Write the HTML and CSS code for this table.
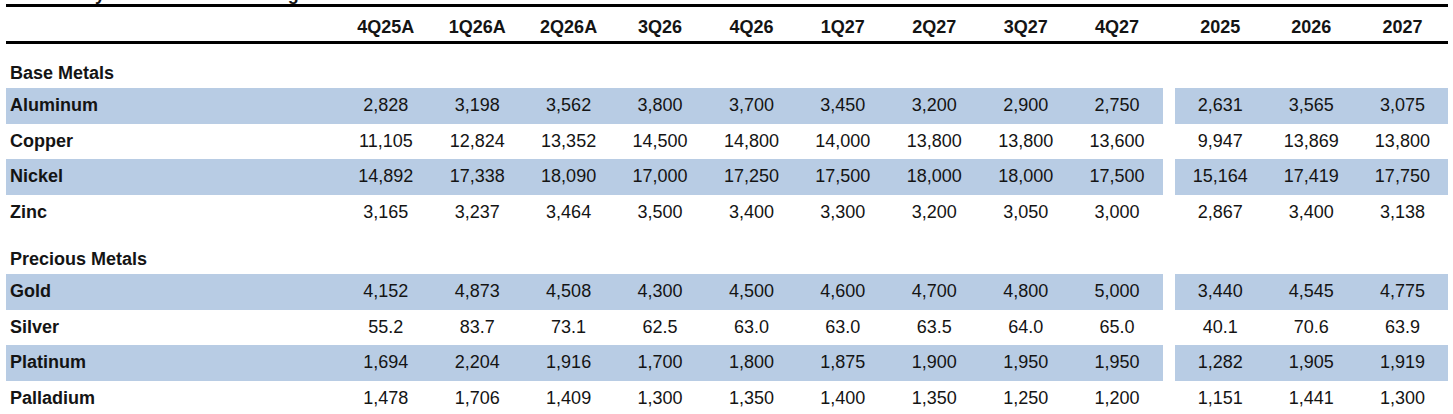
FILE: index.html
```html
<!DOCTYPE html>
<html lang="en">
<head>
<meta charset="utf-8">
<title>Commodity Price Forecast Averages</title>
<link rel="stylesheet" href="styles.css">
</head>
<body>
<div class="title">Commodity Price Forecast Averages</div>
<table class="fc">
  <colgroup>
    <col class="c-label">
    <col class="c-q"><col class="c-q"><col class="c-q"><col class="c-q"><col class="c-q"><col class="c-q"><col class="c-q"><col class="c-q"><col class="c-q">
    <col class="c-gap">
    <col class="c-y"><col class="c-y"><col class="c-y">
  </colgroup>
  <thead>
    <tr>
      <th></th>
      <th>4Q25A</th><th>1Q26A</th><th>2Q26A</th><th>3Q26</th><th>4Q26</th><th>1Q27</th><th>2Q27</th><th>3Q27</th><th>4Q27</th>
      <th class="gap"></th>
      <th>2025</th><th>2026</th><th>2027</th>
    </tr>
  </thead>
  <tbody>
    <tr class="sec"><td colspan="14">Base Metals</td></tr>
    <tr class="band">
      <td class="lbl">Aluminum</td>
      <td>2,828</td><td>3,198</td><td>3,562</td><td>3,800</td><td>3,700</td><td>3,450</td><td>3,200</td><td>2,900</td><td>2,750</td>
      <td class="gap"></td>
      <td>2,631</td><td>3,565</td><td>3,075</td>
    </tr>
    <tr>
      <td class="lbl">Copper</td>
      <td>11,105</td><td>12,824</td><td>13,352</td><td>14,500</td><td>14,800</td><td>14,000</td><td>13,800</td><td>13,800</td><td>13,600</td>
      <td class="gap"></td>
      <td>9,947</td><td>13,869</td><td>13,800</td>
    </tr>
    <tr class="band">
      <td class="lbl">Nickel</td>
      <td>14,892</td><td>17,338</td><td>18,090</td><td>17,000</td><td>17,250</td><td>17,500</td><td>18,000</td><td>18,000</td><td>17,500</td>
      <td class="gap"></td>
      <td>15,164</td><td>17,419</td><td>17,750</td>
    </tr>
    <tr>
      <td class="lbl">Zinc</td>
      <td>3,165</td><td>3,237</td><td>3,464</td><td>3,500</td><td>3,400</td><td>3,300</td><td>3,200</td><td>3,050</td><td>3,000</td>
      <td class="gap"></td>
      <td>2,867</td><td>3,400</td><td>3,138</td>
    </tr>
    <tr class="sec"><td colspan="14">Precious Metals</td></tr>
    <tr class="band">
      <td class="lbl">Gold</td>
      <td>4,152</td><td>4,873</td><td>4,508</td><td>4,300</td><td>4,500</td><td>4,600</td><td>4,700</td><td>4,800</td><td>5,000</td>
      <td class="gap"></td>
      <td>3,440</td><td>4,545</td><td>4,775</td>
    </tr>
    <tr>
      <td class="lbl">Silver</td>
      <td>55.2</td><td>83.7</td><td>73.1</td><td>62.5</td><td>63.0</td><td>63.0</td><td>63.5</td><td>64.0</td><td>65.0</td>
      <td class="gap"></td>
      <td>40.1</td><td>70.6</td><td>63.9</td>
    </tr>
    <tr class="band">
      <td class="lbl">Platinum</td>
      <td>1,694</td><td>2,204</td><td>1,916</td><td>1,700</td><td>1,800</td><td>1,875</td><td>1,900</td><td>1,950</td><td>1,950</td>
      <td class="gap"></td>
      <td>1,282</td><td>1,905</td><td>1,919</td>
    </tr>
    <tr>
      <td class="lbl">Palladium</td>
      <td>1,478</td><td>1,706</td><td>1,409</td><td>1,300</td><td>1,350</td><td>1,400</td><td>1,350</td><td>1,250</td><td>1,200</td>
      <td class="gap"></td>
      <td>1,151</td><td>1,441</td><td>1,300</td>
    </tr>
  </tbody>
</table>
</body>
</html>
```

FILE: styles.css
```css
html, body {
  margin: 0;
  padding: 0;
  background: #ffffff;
}

body {
  font-family: "Liberation Sans", Arial, sans-serif;
  font-size: 18px;
  color: #141414;
  overflow: hidden;
}

.title {
  font-weight: bold;
  font-size: 18px;
  line-height: 20px;
  height: 20px;
  margin-top: -16px;
  padding-left: 6px;
  white-space: nowrap;
}

.fc {
  margin-left: 6px;
  width: 1442px;
  table-layout: fixed;
  border-collapse: collapse;
  border-spacing: 0;
}

.c-label { width: 334px; }
.c-q { width: 91.4px; }
.c-gap { width: 12px; }
.c-y { width: 91px; }

.fc th,
.fc td {
  padding: 0;
  text-align: center;
  white-space: nowrap;
}

.fc thead tr {
  border-top: 3px solid #000;
  border-bottom: 3px solid #000;
}

.fc th {
  font-weight: bold;
  height: 28px;
  line-height: 28px;
  padding-top: 6px;
}

.fc tbody td {
  height: 35.5px;
  line-height: 35.5px;
  font-weight: normal;
}

.fc td.lbl {
  text-align: left;
  padding-left: 4px;
  font-weight: bold;
}

.fc tr.sec td {
  text-align: left;
  padding-left: 4px;
  font-weight: bold;
  height: 24px;
  line-height: 24px;
  padding-top: 17px;
  padding-bottom: 3px;
}

.fc tr.band td {
  background: #b8cce4;
}

.fc tr.band td.gap {
  background: transparent;
}
```
